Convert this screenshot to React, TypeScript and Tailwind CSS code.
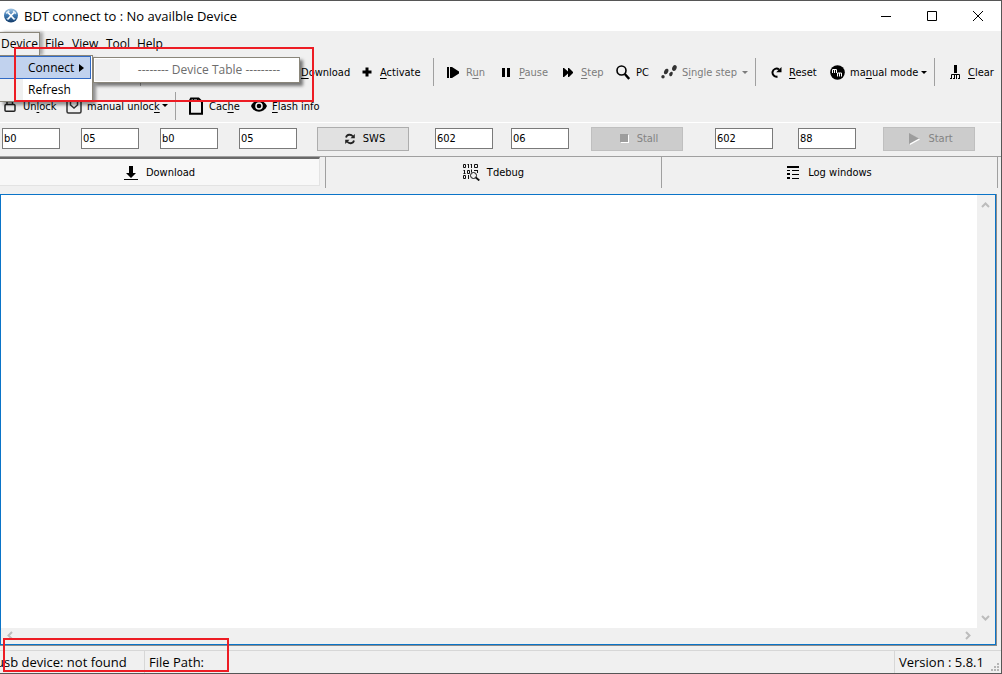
import type { ReactNode } from "react";

const tahoma = "font-['DejaVu_Sans_Condensed','DejaVu_Sans',sans-serif] text-[11px] leading-4";

function Caret() {
  return (
    <svg width="6" height="3" viewBox="0 0 6 3" fill="currentColor">
      <path d="M0 0h6L3 3z" />
    </svg>
  );
}

function Separator({ className = "" }: { className?: string }) {
  return <div className={`h-7 w-px shrink-0 bg-[#a0a0a0] ${className}`} />;
}

type ToolProps = {
  icon: ReactNode;
  before?: string;
  mark?: string;
  after?: string;
  disabled?: boolean;
  menu?: boolean;
  className?: string;
};

function Tool({ icon, before = "", mark = "", after = "", disabled, menu, className = "" }: ToolProps) {
  return (
    <button
      type="button"
      disabled={disabled}
      className={`flex h-7 shrink-0 items-center whitespace-nowrap disabled:text-[#7c7c7c] ${className}`}
    >
      <span className="flex w-5 shrink-0 justify-center text-black">{icon}</span>
      <span className="ml-[3px] pt-[2px]">
        {before}
        <u className="underline-offset-2">{mark}</u>
        {after}
      </span>
      {menu && (
        <span className="ml-auto pr-[7px]">
          <Caret />
        </span>
      )}
    </button>
  );
}

function HexInput({ label, value }: { label: string; value: string }) {
  return (
    <input
      type="text"
      aria-label={label}
      defaultValue={value}
      className="h-[21px] w-[58px] shrink-0 border border-[#7a7a7a] bg-white px-px pb-px outline-none"
    />
  );
}

function PushButton({ icon, label, disabled }: { icon: ReactNode; label: string; disabled?: boolean }) {
  return (
    <button
      type="button"
      disabled={disabled}
      className="flex h-6 w-[92px] shrink-0 items-center justify-center gap-2 border border-[#adadad] bg-[#e1e1e1] pl-1 disabled:border-[#bfbfbf] disabled:bg-[#cccccc] disabled:text-[#838383]"
    >
      {icon}
      <span className="pt-px">{label}</span>
    </button>
  );
}

function AppIcon() {
  return (
    <svg width="16" height="16" viewBox="0 0 16 16">
      <defs>
        <linearGradient id="ball" x1="0" y1="0" x2="0" y2="1">
          <stop offset="0" stopColor="#a3c6e4" />
          <stop offset="0.5" stopColor="#3c77b0" />
          <stop offset="1" stopColor="#123a68" />
        </linearGradient>
      </defs>
      <circle cx="8" cy="7.5" r="7" fill="url(#ball)" />
      <path d="M5 4.5l6 6.5M11 4.5L5 11" stroke="#fff" strokeWidth="1.8" />
      <path d="M3.2 5.4l3-2.6M10.2 3l2.6 2.6" stroke="#e6f1fa" strokeWidth="1.6" />
      <path d="M3.8 10.2l1.6 1.6M10.6 11.8l1.6-1.6" stroke="#c4dbef" strokeWidth="1.2" />
    </svg>
  );
}

const icons = {
  plus: (
    <svg width="10" height="10" viewBox="0 0 10 10">
      <path d="M3.5 0.5h3v3h3v3h-3v3h-3v-3h-3v-3h3z" />
    </svg>
  ),
  run: (
    <svg width="12" height="11" viewBox="0 0 12 11">
      <path d="M0 0h2v11H0zM3 0h2l7 4.5v2L5 11H3z" />
    </svg>
  ),
  pause: (
    <svg width="8" height="9" viewBox="0 0 8 9">
      <path d="M0 0h3v9H0zM5 0h3v9H5z" />
    </svg>
  ),
  step: (
    <svg width="10" height="9" viewBox="0 0 10 9">
      <path d="M0 0h1l4 3.5V0h1l4 4v1L6 9H5V5.5L1 9H0z" />
    </svg>
  ),
  search: (
    <svg width="14" height="15" viewBox="0 0 14 15" fill="none" stroke="#000">
      <circle cx="5.5" cy="5.5" r="4.5" strokeWidth="1.6" />
      <path d="M8.8 9l4.4 5" strokeWidth="2.4" />
    </svg>
  ),
  feet: (
    <svg width="16" height="14" viewBox="0 0 16 14" fill="#333">
      <ellipse cx="5.2" cy="6.5" rx="2" ry="2.9" transform="rotate(25 5.2 6.5)" />
      <circle cx="2" cy="11.8" r="1.7" />
      <ellipse cx="13.4" cy="3" rx="2.1" ry="3" transform="rotate(25 13.4 3)" />
      <ellipse cx="10" cy="9" rx="1.6" ry="2.4" transform="rotate(25 10 9)" />
    </svg>
  ),
  reset: (
    <svg width="11" height="11" viewBox="0 0 11 11">
      <path d="M8 2.5A4 4 0 1 0 6.5 9.5" fill="none" stroke="#000" strokeWidth="2" />
      <path d="M10.5 0v5.2H5.2z" />
    </svg>
  ),
  mm: (
    <svg width="15" height="15" viewBox="0 0 15 15">
      <circle cx="7.5" cy="7.5" r="7.3" />
      <path d="M2.5 8V4.5h4V8M4.5 4.5V8M7.5 11.5V8h4v3.5M9.5 8v3.5" fill="none" stroke="#fff" />
    </svg>
  ),
  clear: (
    <svg width="10" height="15" viewBox="0 0 10 15">
      <path d="M4 0h3v8H4z" />
      <path d="M1.5 14V9.5h8V14M4.5 14V9.5M6.5 14V9.5M0 13.5h2M3 13.5h1.5M6 13.5h1M8 13.5h2" fill="none" stroke="#000" />
    </svg>
  ),
  lock: (
    <svg width="12" height="12" viewBox="0 0 12 12" fill="none" stroke="#222" strokeWidth="1.5">
      <rect x="1" y="4.5" width="10" height="6.7" rx="1" />
      <path d="M3 4.5V1.5h5.5v3" />
    </svg>
  ),
  save: (
    <svg width="16" height="16" viewBox="0 0 16 16" fill="none" stroke="#333" strokeWidth="1.5">
      <rect x="1" y="1" width="14" height="14" rx="1.5" />
      <path d="M4.5 3v4l3.5 3 3.5-3V3" />
    </svg>
  ),
  cache: (
    <svg width="14" height="18" viewBox="0 0 14 18">
      <path d="M1 3.5v13.3h12V5L9.5 1.5H2z" fill="none" stroke="#000" strokeWidth="2" />
      <path d="M4.5 2v3M8.5 2v3" stroke="#000" />
    </svg>
  ),
  eye: (
    <svg width="16" height="12" viewBox="0 0 16 12">
      <path d="M0 6C3-1.5 13-1.5 16 6 13 13.5 3 13.5 0 6z" />
      <circle cx="8" cy="6" r="3.8" fill="#f0f0f0" />
      <circle cx="8" cy="6" r="2.3" />
    </svg>
  ),
};

function Scrollbars({ children }: { children: ReactNode }) {
  const chevron = "fill-none stroke-[#bcbcbc] stroke-2";
  return (
    <div className="grid min-h-0 flex-1 grid-cols-[1fr_18px] grid-rows-[1fr_16px] border border-[#0a74c8] bg-white">
      {children}
      <div className="flex flex-col items-center justify-between bg-[#f0f0f0] py-[7px] pr-px">
        <svg width="9" height="6" viewBox="0 0 9 6" className={chevron}>
          <path d="M1 5l3.5-3.5L8 5" />
        </svg>
        <svg width="9" height="6" viewBox="0 0 9 6" className={chevron}>
          <path d="M1 1l3.5 3.5L8 1" />
        </svg>
      </div>
      <div className="flex items-center justify-between bg-[#f0f0f0] px-[6px] pb-px">
        <svg width="6" height="9" viewBox="0 0 6 9" className={chevron}>
          <path d="M5 1L1.5 4.5 5 8" />
        </svg>
        <svg width="6" height="9" viewBox="0 0 6 9" className={chevron}>
          <path d="M1 1l3.5 3.5L1 8" />
        </svg>
      </div>
      <div className="bg-[#f0f0f0]" />
    </div>
  );
}

function DeviceMenu() {
  return (
    <div className="absolute left-0 top-[54px] z-20 w-[93px] border-y border-r border-[#8a867a] bg-white shadow-[3px_3px_3px_rgba(0,0,0,0.4)]">
      <button
        type="button"
        className="flex h-[23px] w-[91px] items-center justify-between border border-l-0 border-[#316ac5] bg-[#c1d2ee] pl-7 pr-[6px]"
      >
        Connect
        <svg width="5" height="8" viewBox="0 0 5 8">
          <path d="M0 0l5 4-5 4z" />
        </svg>
      </button>
      <button type="button" className="flex h-[22px] w-full items-center bg-linear-to-r from-[#f0f0f0] from-25% to-white to-25% pl-7">
        Refresh
      </button>
      <div className="absolute left-[93px] top-px flex h-[26px] w-[207px] items-center border border-[#8a867a] bg-white p-px shadow-[3px_3px_3px_rgba(0,0,0,0.5)]">
        <div className="h-full w-[25px] bg-[#f0f0f0]" />
        <span className="flex-1 whitespace-nowrap text-center text-[#6d6d6d]">-------- Device Table ---------</span>
      </div>
    </div>
  );
}

export default function App() {
  return (
    <div className="relative flex h-screen flex-col overflow-hidden border-y border-r border-[#565656] bg-[#f0f0f0] font-['Open_Sans','Noto_Sans',sans-serif] text-xs leading-4 text-black">
      <header className="flex h-[30px] shrink-0 items-center bg-white pl-[3px]">
        <AppIcon />
        <h1 className="ml-[5px] flex-1 text-[13px]">BDT connect to : No availble Device</h1>
        <button type="button" aria-label="Minimize" className="flex w-[46px] justify-center">
          <svg width="10" height="10" viewBox="0 0 10 10" stroke="#000">
            <path d="M0 5.5h10" />
          </svg>
        </button>
        <button type="button" aria-label="Maximize" className="flex w-[46px] justify-center">
          <svg width="10" height="10" viewBox="0 0 10 10" fill="none" stroke="#000">
            <path d="M.5.5h9v9h-9z" />
          </svg>
        </button>
        <button type="button" aria-label="Close" className="flex w-[46px] justify-center">
          <svg width="10" height="10" viewBox="0 0 10 10" stroke="#000">
            <path d="M0 0l10 10M10 0L0 10" />
          </svg>
        </button>
      </header>

      <nav className="flex h-6 shrink-0 items-end">
        <button type="button" className="h-[23px] w-10 border-r border-t border-[#8a867a] bg-[#f0f0f0] pl-px text-left shadow-[3px_0_3px_rgba(0,0,0,0.3)]">
          Device
        </button>
        <button type="button" className="h-[23px] w-[27px] pl-[5px] text-left">File</button>
        <button type="button" className="h-[23px] w-[34px] pl-[5px] text-left">View</button>
        <button type="button" className="h-[23px] w-[31px] pl-[5px] text-left">Tool</button>
        <button type="button" className="h-[23px] pl-[5px] text-left">Help</button>
      </nav>

      <div className={tahoma}>
        <div className="flex h-[34px] items-center">
          <Separator className="ml-[140px]" />
          <Tool icon={null} mark="D" after="ownload" className="ml-[137px] w-[79px]" />
          <Tool icon={icons.plus} mark="A" after="ctivate" className="w-[76px]" />
          <Separator />
          <Tool icon={icons.run} before="R" mark="u" after="n" disabled className="ml-[9px] w-[53px]" />
          <Tool icon={icons.pause} mark="P" after="ause" disabled className="w-[62px]" />
          <Tool icon={icons.step} mark="S" after="tep" disabled className="w-[55px]" />
          <Tool icon={icons.search} after="PC" className="w-[46px]" />
          <Tool icon={icons.feet} before="S" mark="i" after="ngle step" disabled menu className="w-24" />
          <Separator />
          <Tool icon={icons.reset} mark="R" after="eset" className="ml-[10px] w-[61px]" />
          <Tool icon={icons.mm} before="ma" mark="n" after="ual mode" menu className="w-[107px]" />
          <Separator />
          <Tool icon={icons.clear} mark="C" after="lear" className="ml-[10px]" />
        </div>
        <div className="flex h-[33px] items-center">
          <Tool icon={icons.lock} before="Un" mark="l" after="ock" className="w-16" />
          <Tool icon={icons.save} before="manual unloc" mark="k" menu className="w-[111px]" />
          <Separator />
          <Tool icon={icons.cache} before="Cac" mark="h" after="e" className="ml-[10px] w-[63px]" />
          <Tool icon={icons.eye} mark="F" after="lash info" />
        </div>
      </div>

      <form className={`flex h-[35px] shrink-0 items-center border-b border-t border-b-[#a0a0a0] border-t-white pb-[2px] pl-[2px] ${tahoma}`}>
        <div className="flex gap-[21px]">
          <HexInput label="Address high" value="b0" />
          <HexInput label="Address low" value="05" />
          <HexInput label="Write address high" value="b0" />
          <HexInput label="Write address low" value="05" />
        </div>
        <div className="ml-5">
          <PushButton
            label="SWS"
            icon={
              <svg width="10" height="12" viewBox="0 0 10 12">
                <path d="M1 4.5C2 1 6 1 8 3.5M9 7.5C8 11 4 11 2 8.5" fill="none" stroke="#222" strokeWidth="1.8" />
                <path d="M9.8 1v4.2H5.5zM.2 11V6.8h4.3z" fill="#222" />
              </svg>
            }
          />
        </div>
        <div className="ml-[26px] flex gap-[18px]">
          <HexInput label="Stall address" value="602" />
          <HexInput label="Stall value" value="06" />
        </div>
        <div className="ml-[22px]">
          <PushButton
            disabled
            label="Stall"
            icon={
              <svg width="9" height="9" viewBox="0 0 9 9">
                <path d="M1 1h8v8H1z" fill="#fff" />
                <path d="M0 0h8v8H0z" fill="#9d9d9d" />
              </svg>
            }
          />
        </div>
        <div className="ml-8 flex gap-[25px]">
          <HexInput label="Start address" value="602" />
          <HexInput label="Start value" value="88" />
        </div>
        <div className="ml-[27px]">
          <PushButton
            disabled
            label="Start"
            icon={
              <svg width="11" height="12" viewBox="0 0 11 12">
                <path d="M1 1l10 5.5L1 12z" fill="#fff" />
                <path d="M0 0l10 5.5L0 11z" fill="#9d9d9d" />
              </svg>
            }
          />
        </div>
      </form>

      <div role="tablist" className={`flex h-[31px] shrink-0 pr-[3px] ${tahoma}`}>
        <div className="flex flex-[320] border-r border-[#a0a0a0] pb-[2px] pr-[5px]">
          <button
            type="button"
            role="tab"
            aria-selected="true"
            className="flex flex-1 items-center justify-center gap-2 border-b border-r border-t-2 border-b-[#e3e3e3] border-r-[#e3e3e3] border-t-[#696969] bg-[#f8f8f8] pt-[2px]"
          >
            <svg width="14" height="14" viewBox="0 0 14 14">
              <path d="M5 0h4v7h3l-5 5-5-5h3zM0 13h14v1H0z" />
            </svg>
            Download
          </button>
        </div>
        <button type="button" role="tab" aria-selected="false" className="flex flex-[335] items-center justify-center gap-[7px] border-r border-[#a0a0a0]">
          <svg width="17" height="17" viewBox="0 0 17 17" fill="none" stroke="#111">
            <path d="M.5.5h2v3h-2zM5.5 0v4M4.5.5h1M8.5 0v4M7.5.5h1M11.5.5h3v3h-3zM1.5 6v4M.5 6.5h1M.5 9.5h2M4.5 6.5h2v3h-2zM8.5 5.5v3M11 6.5h4M14.5 6v3M.5 11.5h2v3h-2zM5.5 11v4" />
            <circle cx="10.5" cy="11.5" r="3" />
            <path d="M12.8 13.5l3.5 3" strokeWidth="1.8" />
          </svg>
          Tdebug
        </button>
        <button type="button" role="tab" aria-selected="false" className="flex flex-[335] items-center justify-center gap-[9px] border-r border-[#a0a0a0]">
          <svg width="12" height="13" viewBox="0 0 12 13">
            <path d="M0 0h12v2H0zM0 4h3v1H0zM5 4h7v1H5zM0 7h3v2H0zM5 8h7v1H5zM0 11h3v2H0zM5 12h7v1H5z" />
          </svg>
          Log windows
        </button>
      </div>

      <main className="flex min-h-0 flex-1 flex-col pr-1 pt-[6px]">
        <div className="flex min-h-0 flex-1 flex-col border-b border-r border-[#8c8c8c]">
          <Scrollbars>
            <textarea aria-label="Output" className="resize-none outline-none" />
          </Scrollbars>
        </div>
      </main>

      <footer className="mt-1 flex h-[23px] shrink-0 items-stretch border-t border-[#d7d7d7] text-[13px] leading-[22px]">
        <span className="-ml-1 w-[149px] border-r border-[#d7d7d7]">usb device: not found</span>
        <span className="flex-1 pl-1">File Path:</span>
        <span className="w-[107px] border-l border-[#d7d7d7] pl-1">Version : 5.8.1</span>
        <svg width="9" height="9" viewBox="0 0 9 9" fill="#b5b5b5" className="absolute bottom-px right-px">
          <path d="M6 0h2v2H6zM3 3h2v2H3zM6 3h2v2H6zM0 6h2v2H0zM3 6h2v2H3zM6 6h2v2H6z" />
        </svg>
      </footer>

      <DeviceMenu />
      <div className="pointer-events-none absolute left-[14px] top-[46px] z-30 h-[55px] w-[300px] border-2 border-[#ed1c24]" />
      <div className="pointer-events-none absolute bottom-px left-[3px] z-30 h-[34px] w-[226px] border-2 border-[#ed1c24]" />
    </div>
  );
}
